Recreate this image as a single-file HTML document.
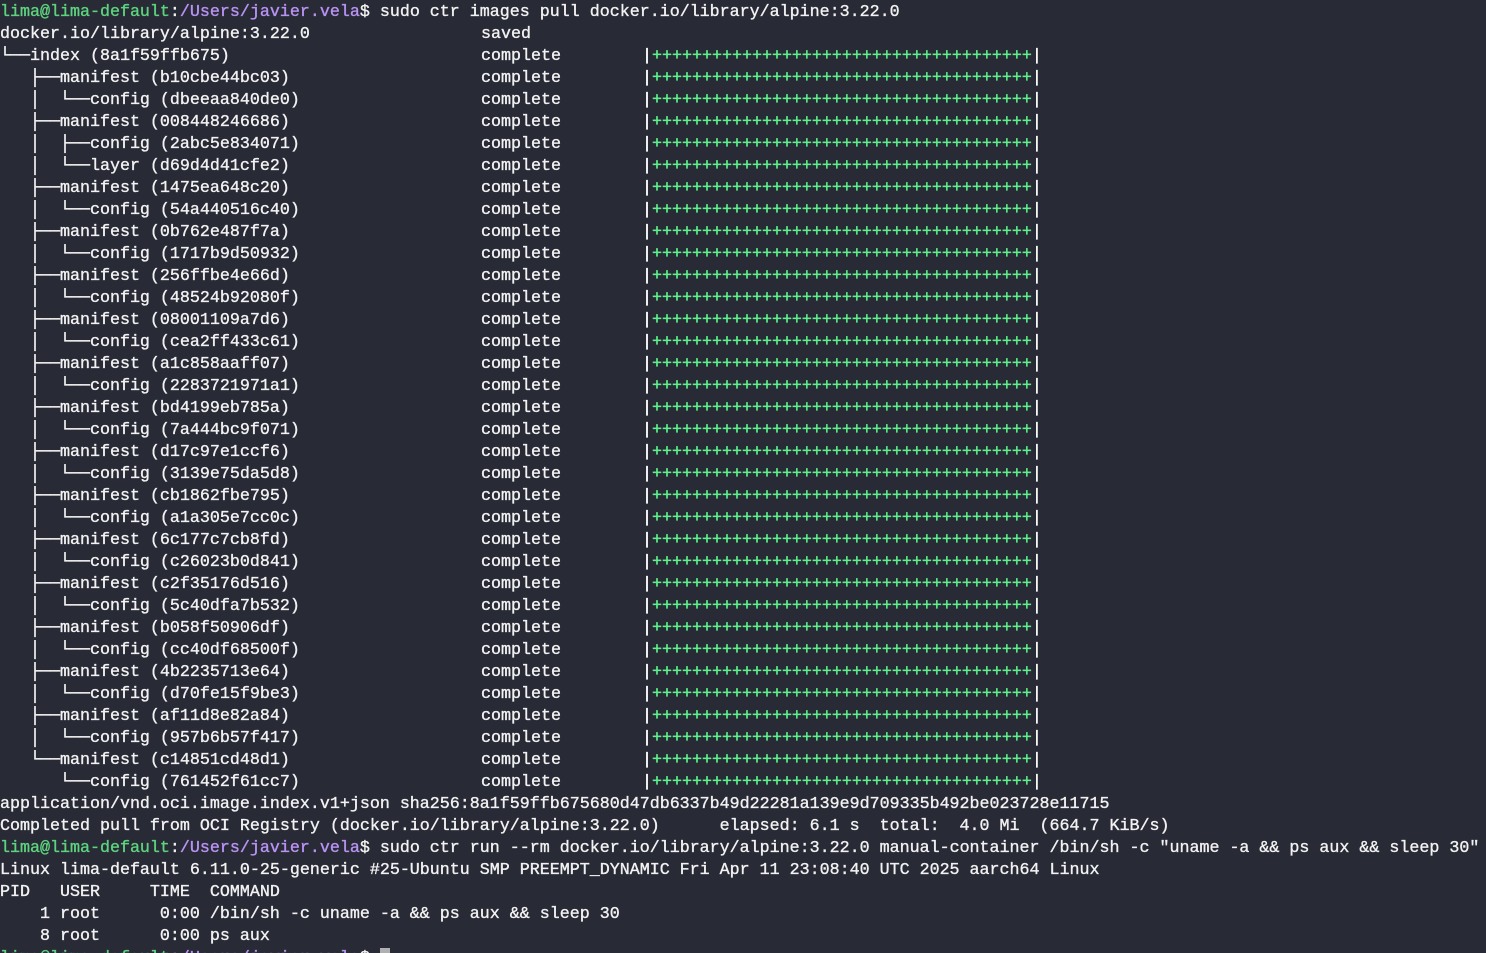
<!DOCTYPE html>
<html><head><meta charset="utf-8"><style>
html,body{margin:0;padding:0;background:#282a36;width:1486px;height:953px;overflow:hidden}
body{font-family:"Liberation Mono","DejaVu Sans Mono",monospace;font-size:16.67px;line-height:22px;color:#f2f2f2;-webkit-text-stroke:0.35px currentColor;padding-top:2px;box-sizing:border-box}
.r{height:22px;display:flex;white-space:pre}
.a{width:481px;flex:none;overflow:hidden}
.b{width:161px;flex:none}
.g{color:#5ed37e}.p{color:#b893f2}
.bar{color:#fff}
.pl{color:#5ef08a}
.cur{display:inline-block;width:10px;height:20px;background:#b0b0b0;vertical-align:top}
</style></head><body><div class="r"><span class="g">lima@lima-default</span>:<span class="p">/Users/javier.vela</span>$ sudo ctr images pull docker.io/library/alpine:3.22.0</div><div class="r"><span class="a">docker.io/library/alpine:3.22.0</span><span>saved</span></div><div class="r"><span class="a">└──index (8a1f59ffb675)</span><span class="b">complete</span><span class="bar">|<span class="pl">++++++++++++++++++++++++++++++++++++++</span>|</span></div><div class="r"><span class="a">   ├──manifest (b10cbe44bc03)</span><span class="b">complete</span><span class="bar">|<span class="pl">++++++++++++++++++++++++++++++++++++++</span>|</span></div><div class="r"><span class="a">   │  └──config (dbeeaa840de0)</span><span class="b">complete</span><span class="bar">|<span class="pl">++++++++++++++++++++++++++++++++++++++</span>|</span></div><div class="r"><span class="a">   ├──manifest (008448246686)</span><span class="b">complete</span><span class="bar">|<span class="pl">++++++++++++++++++++++++++++++++++++++</span>|</span></div><div class="r"><span class="a">   │  ├──config (2abc5e834071)</span><span class="b">complete</span><span class="bar">|<span class="pl">++++++++++++++++++++++++++++++++++++++</span>|</span></div><div class="r"><span class="a">   │  └──layer (d69d4d41cfe2)</span><span class="b">complete</span><span class="bar">|<span class="pl">++++++++++++++++++++++++++++++++++++++</span>|</span></div><div class="r"><span class="a">   ├──manifest (1475ea648c20)</span><span class="b">complete</span><span class="bar">|<span class="pl">++++++++++++++++++++++++++++++++++++++</span>|</span></div><div class="r"><span class="a">   │  └──config (54a440516c40)</span><span class="b">complete</span><span class="bar">|<span class="pl">++++++++++++++++++++++++++++++++++++++</span>|</span></div><div class="r"><span class="a">   ├──manifest (0b762e487f7a)</span><span class="b">complete</span><span class="bar">|<span class="pl">++++++++++++++++++++++++++++++++++++++</span>|</span></div><div class="r"><span class="a">   │  └──config (1717b9d50932)</span><span class="b">complete</span><span class="bar">|<span class="pl">++++++++++++++++++++++++++++++++++++++</span>|</span></div><div class="r"><span class="a">   ├──manifest (256ffbe4e66d)</span><span class="b">complete</span><span class="bar">|<span class="pl">++++++++++++++++++++++++++++++++++++++</span>|</span></div><div class="r"><span class="a">   │  └──config (48524b92080f)</span><span class="b">complete</span><span class="bar">|<span class="pl">++++++++++++++++++++++++++++++++++++++</span>|</span></div><div class="r"><span class="a">   ├──manifest (08001109a7d6)</span><span class="b">complete</span><span class="bar">|<span class="pl">++++++++++++++++++++++++++++++++++++++</span>|</span></div><div class="r"><span class="a">   │  └──config (cea2ff433c61)</span><span class="b">complete</span><span class="bar">|<span class="pl">++++++++++++++++++++++++++++++++++++++</span>|</span></div><div class="r"><span class="a">   ├──manifest (a1c858aaff07)</span><span class="b">complete</span><span class="bar">|<span class="pl">++++++++++++++++++++++++++++++++++++++</span>|</span></div><div class="r"><span class="a">   │  └──config (2283721971a1)</span><span class="b">complete</span><span class="bar">|<span class="pl">++++++++++++++++++++++++++++++++++++++</span>|</span></div><div class="r"><span class="a">   ├──manifest (bd4199eb785a)</span><span class="b">complete</span><span class="bar">|<span class="pl">++++++++++++++++++++++++++++++++++++++</span>|</span></div><div class="r"><span class="a">   │  └──config (7a444bc9f071)</span><span class="b">complete</span><span class="bar">|<span class="pl">++++++++++++++++++++++++++++++++++++++</span>|</span></div><div class="r"><span class="a">   ├──manifest (d17c97e1ccf6)</span><span class="b">complete</span><span class="bar">|<span class="pl">++++++++++++++++++++++++++++++++++++++</span>|</span></div><div class="r"><span class="a">   │  └──config (3139e75da5d8)</span><span class="b">complete</span><span class="bar">|<span class="pl">++++++++++++++++++++++++++++++++++++++</span>|</span></div><div class="r"><span class="a">   ├──manifest (cb1862fbe795)</span><span class="b">complete</span><span class="bar">|<span class="pl">++++++++++++++++++++++++++++++++++++++</span>|</span></div><div class="r"><span class="a">   │  └──config (a1a305e7cc0c)</span><span class="b">complete</span><span class="bar">|<span class="pl">++++++++++++++++++++++++++++++++++++++</span>|</span></div><div class="r"><span class="a">   ├──manifest (6c177c7cb8fd)</span><span class="b">complete</span><span class="bar">|<span class="pl">++++++++++++++++++++++++++++++++++++++</span>|</span></div><div class="r"><span class="a">   │  └──config (c26023b0d841)</span><span class="b">complete</span><span class="bar">|<span class="pl">++++++++++++++++++++++++++++++++++++++</span>|</span></div><div class="r"><span class="a">   ├──manifest (c2f35176d516)</span><span class="b">complete</span><span class="bar">|<span class="pl">++++++++++++++++++++++++++++++++++++++</span>|</span></div><div class="r"><span class="a">   │  └──config (5c40dfa7b532)</span><span class="b">complete</span><span class="bar">|<span class="pl">++++++++++++++++++++++++++++++++++++++</span>|</span></div><div class="r"><span class="a">   ├──manifest (b058f50906df)</span><span class="b">complete</span><span class="bar">|<span class="pl">++++++++++++++++++++++++++++++++++++++</span>|</span></div><div class="r"><span class="a">   │  └──config (cc40df68500f)</span><span class="b">complete</span><span class="bar">|<span class="pl">++++++++++++++++++++++++++++++++++++++</span>|</span></div><div class="r"><span class="a">   ├──manifest (4b2235713e64)</span><span class="b">complete</span><span class="bar">|<span class="pl">++++++++++++++++++++++++++++++++++++++</span>|</span></div><div class="r"><span class="a">   │  └──config (d70fe15f9be3)</span><span class="b">complete</span><span class="bar">|<span class="pl">++++++++++++++++++++++++++++++++++++++</span>|</span></div><div class="r"><span class="a">   ├──manifest (af11d8e82a84)</span><span class="b">complete</span><span class="bar">|<span class="pl">++++++++++++++++++++++++++++++++++++++</span>|</span></div><div class="r"><span class="a">   │  └──config (957b6b57f417)</span><span class="b">complete</span><span class="bar">|<span class="pl">++++++++++++++++++++++++++++++++++++++</span>|</span></div><div class="r"><span class="a">   └──manifest (c14851cd48d1)</span><span class="b">complete</span><span class="bar">|<span class="pl">++++++++++++++++++++++++++++++++++++++</span>|</span></div><div class="r"><span class="a">      └──config (761452f61cc7)</span><span class="b">complete</span><span class="bar">|<span class="pl">++++++++++++++++++++++++++++++++++++++</span>|</span></div><div class="r">application/vnd.oci.image.index.v1+json sha256:8a1f59ffb675680d47db6337b49d22281a139e9d709335b492be023728e11715</div><div class="r">Completed pull from OCI Registry (docker.io/library/alpine:3.22.0)      elapsed: 6.1 s  total:  4.0 Mi  (664.7 KiB/s)</div><div class="r"><span class="g">lima@lima-default</span>:<span class="p">/Users/javier.vela</span>$ sudo ctr run --rm docker.io/library/alpine:3.22.0 manual-container /bin/sh -c "uname -a &amp;&amp; ps aux &amp;&amp; sleep 30"</div><div class="r">Linux lima-default 6.11.0-25-generic #25-Ubuntu SMP PREEMPT_DYNAMIC Fri Apr 11 23:08:40 UTC 2025 aarch64 Linux</div><div class="r">PID   USER     TIME  COMMAND</div><div class="r">    1 root      0:00 /bin/sh -c uname -a &amp;&amp; ps aux &amp;&amp; sleep 30</div><div class="r">    8 root      0:00 ps aux</div><div class="r"><span class="g">lima@lima-default</span>:<span class="p">/Users/javier.vela</span>$ <span class="cur"></span></div></body></html>
